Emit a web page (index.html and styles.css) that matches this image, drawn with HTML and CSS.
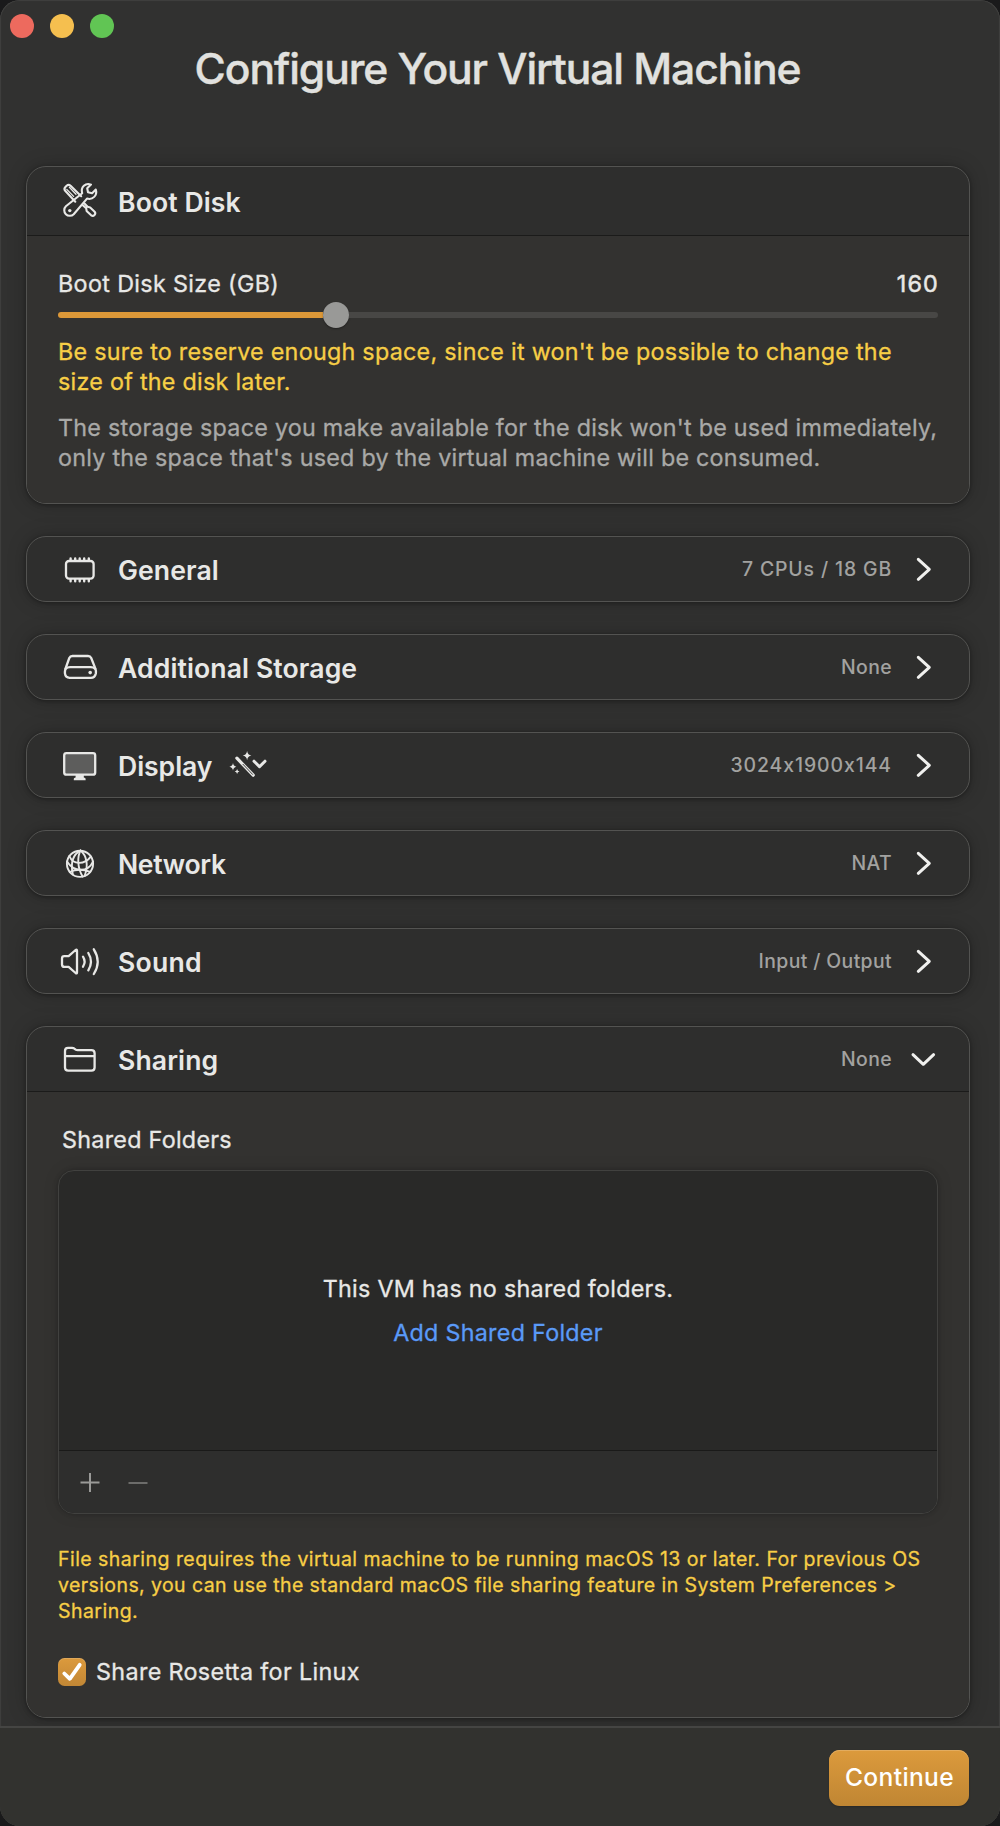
FILE: index.html
```
<!DOCTYPE html>
<html lang="en">
<head>
<meta charset="utf-8">
<title>Configure Your Virtual Machine</title>
<link rel="stylesheet" href="styles.css">
</head>
<body>
<div class="window">
  <header class="titlebar">
    <div class="lights">
      <span class="light light-close"></span>
      <span class="light light-minimize"></span>
      <span class="light light-zoom"></span>
    </div>
    <h1 class="title">Configure Your Virtual Machine</h1>
  </header>

  <main class="content">
    <section class="card">
      <div class="card-header card-header-tall card-header-open">
        <svg class="icon icon-tools" width="40" height="40" viewBox="0 0 40 40">
          <path d="M15.3 20.7 L5.2 9.8 Q3.6 7.7 5.4 5.9 L6.6 4.7 Q8.6 3 10.6 4.7 L21.2 15.2"/>
          <path d="M6.8 8.4 L13.6 15.4 M9.4 6.2 L16 13.2" class="thin"/>
          <path d="M22.5 24 L26.2 27.2 L26.6 29.9 L31.2 34.3 Q33 35.5 34.5 34 Q36 32.2 34.6 30.7 L30.2 26.4 L27.6 25.8 L24.5 22.6"/>
          <path d="M31 3.6 C25.5 1.3 20.4 6.4 22.2 12.2 L5.9 25.3 A5.3 5.3 0 1 0 13.7 33.2 L27 17.6 C32.7 19.2 37.6 14.4 35.8 8.6 L32.1 12.2 L28 11.2 L27.2 7.3 Z"/>
          <circle cx="9.8" cy="29.6" r="1.7" class="solid"/>
        </svg>
        <h2 class="card-title">Boot Disk</h2>
      </div>
      <div class="card-body boot-body">
        <div class="field-row">
          <span>Boot Disk Size (GB)</span>
          <span class="field-value">160</span>
        </div>
        <div class="slider">
          <div class="slider-fill"></div>
          <div class="slider-knob"></div>
          <div class="slider-rest"></div>
        </div>
        <p class="text text-warning">Be sure to reserve enough space, since it won't be possible to change the<br>size of the disk later.</p>
        <p class="text text-muted">The storage space you make available for the disk won't be used immediately,<br>only the space that's used by the virtual machine will be consumed.</p>
      </div>
    </section>

    <section class="card">
      <div class="card-header">
        <svg class="icon" width="40" height="40" viewBox="0 0 40 40">
          <rect x="6" y="12" width="27.6" height="17.6" rx="3"/>
          <path d="M10.6 11V9.4M15.2 11V9.4M19.7 11V9.4M24.2 11V9.4M28.8 11V9.4M10.6 30.5v1.7M15.2 30.5v1.7M19.7 30.5v1.7M24.2 30.5v1.7M28.8 30.5v1.7" class="pins"/>
        </svg>
        <h2 class="card-title">General</h2>
        <span class="summary summary-wide">7 CPUs / 18 GB</span>
        <svg class="chevron" width="28" height="28" viewBox="0 0 28 28"><path d="M9.3 4.3 L20.3 14.3 L9.3 24.3"/></svg>
      </div>
    </section>

    <section class="card">
      <div class="card-header">
        <svg class="icon" width="40" height="40" viewBox="0 0 40 40">
          <path d="M12.4 9 H28 Q30.3 9 31.2 11 L35.4 21.6 Q36.2 24 35.9 26.2 Q35 30.8 30.8 30.8 H9.6 Q5.4 30.8 4.9 26.2 Q4.8 24 5.5 21.6 L9.3 11 Q10.2 9 12.4 9 Z"/>
          <path d="M5.6 21.8 Q7.4 20.2 10 20.2 H30.6 Q33.4 20.2 35.2 21.8"/>
          <circle cx="30.2" cy="25.6" r="1.8" class="solid"/>
        </svg>
        <h2 class="card-title">Additional Storage</h2>
        <span class="summary">None</span>
        <svg class="chevron" width="28" height="28" viewBox="0 0 28 28"><path d="M9.3 4.3 L20.3 14.3 L9.3 24.3"/></svg>
      </div>
    </section>

    <section class="card">
      <div class="card-header">
        <svg class="icon" width="40" height="40" viewBox="0 0 40 40">
          <rect x="4.2" y="8.2" width="31" height="21.4" rx="2.2" class="screen"/>
          <path d="M15.6 30 h8.2 v2.4 q1.8 .3 1.8 1.4 v1.5 h-11.8 v-1.5 q0 -1.1 1.8 -1.4z" class="solid"/>
        </svg>
        <h2 class="card-title title-display">Display</h2>
        <svg class="wand" width="40" height="32" viewBox="0 0 40 32">
          <path d="M7.9 8.2 L24.2 25.2" class="wand-edge"/>
          <path d="M9 9.5 L12.3 12.8" class="wand-tip"/>
          <path d="M14 14.3 L23.6 24.4" class="wand-core"/>
          <path d="M18.1 1 Q18.7 5 22.4 5.6 Q18.7 6.2 18.1 10.2 Q17.5 6.2 13.7 5.6 Q17.5 5 18.1 1Z" class="solid"/>
          <path d="M4 13 Q4.5 16.2 7.4 16.7 Q4.5 17.2 4 20.4 Q3.5 17.2 .4 16.7 Q3.5 16.2 4 13Z" class="solid"/>
          <path d="M8.1 19 Q8.4 21.2 10.5 21.5 Q8.4 21.8 8.1 24 Q7.8 21.8 5.7 21.5 Q7.8 21.2 8.1 19Z" class="solid"/>
          <path d="M25 11.2 L30.5 16.7 L36 11.2" class="wand-chevron"/>
        </svg>
        <span class="summary summary-digits">3024x1900x144</span>
        <svg class="chevron" width="28" height="28" viewBox="0 0 28 28"><path d="M9.3 4.3 L20.3 14.3 L9.3 24.3"/></svg>
      </div>
    </section>

    <section class="card">
      <div class="card-header">
        <svg class="icon" width="40" height="40" viewBox="0 0 40 40">
          <g class="globe">
            <circle cx="20" cy="20.8" r="13.1"/>
            <path d="M20.5 7.6 C13 11.5 10.2 19 12.8 31.2"/>
            <path d="M20.5 7.6 C17 14 17.5 25 22.6 33.4"/>
            <path d="M20.5 7.6 C26.5 12.5 28.8 22 24.6 33"/>
            <path d="M9.4 13 C13 22.5 25 21.5 30.8 13.6"/>
            <path d="M7 18.5 C14 29.5 28 29.5 33 18.6"/>
            <path d="M9.8 29 C17 25.6 26 27.3 30.2 28.8"/>
          </g>
        </svg>
        <h2 class="card-title title-network">Network</h2>
        <span class="summary">NAT</span>
        <svg class="chevron" width="28" height="28" viewBox="0 0 28 28"><path d="M9.3 4.3 L20.3 14.3 L9.3 24.3"/></svg>
      </div>
    </section>

    <section class="card">
      <div class="card-header">
        <svg class="icon icon-sound" width="40" height="40" viewBox="0 0 40 40">
          <path d="M4.3 15.2 H8.6 L15.6 9 Q17 8.2 17 9.8 V31.4 Q17 33 15.6 32 L8.6 25.9 H4.3 Q2 25.9 2 23.6 V17.5 Q2 15.2 4.3 15.2 Z"/>
          <path d="M23 15.6 Q26.2 20.6 23 25.7 M28.3 12 Q33.6 20.6 28.3 29.3 M33.8 8.3 Q41.6 20.6 33.8 33"/>
        </svg>
        <h2 class="card-title title-wide">Sound</h2>
        <span class="summary">Input / Output</span>
        <svg class="chevron" width="28" height="28" viewBox="0 0 28 28"><path d="M9.3 4.3 L20.3 14.3 L9.3 24.3"/></svg>
      </div>
    </section>

    <section class="card card-sharing">
      <div class="card-header card-header-open">
        <svg class="icon" width="40" height="40" viewBox="0 0 40 40">
          <path d="M5 12 Q5 8.9 8 8.9 H12 Q13.4 8.9 14.4 9.7 L15.6 10.6 Q16.4 11.2 17.8 11.2 H31.4 Q34.6 11.2 34.6 14.3 V28.6 Q34.6 31.7 31.4 31.7 H8.2 Q5 31.7 5 28.6 Z M5 17.2 H34.6"/>
        </svg>
        <h2 class="card-title">Sharing</h2>
        <span class="summary">None</span>
        <svg class="chevron" width="28" height="28" viewBox="0 0 28 28"><path d="M4 9.7 L14.3 19.3 L24.6 9.7"/></svg>
      </div>
      <div class="card-body sharing-body">
        <div class="list-label">Shared Folders</div>
        <div class="list">
          <div class="list-empty">
            <span class="empty-text">This VM has no shared folders.</span>
            <a class="empty-link">Add Shared Folder</a>
          </div>
          <div class="list-toolbar">
            <svg width="20" height="20" viewBox="0 0 20 20"><path d="M.5 10.5 H19.5 M10 1 V20" class="plus"/></svg>
            <svg width="20" height="20" viewBox="0 0 20 20"><path d="M.5 11 H19.5" class="minus"/></svg>
          </div>
        </div>
        <p class="note">File sharing requires the virtual machine to be running macOS 13 or later. For previous OS<br><span class="note-line">versions, you can use the standard macOS file sharing feature in System Preferences &gt;</span><br>Sharing.</p>
        <label class="check-row">
          <span class="checkbox"><svg width="28" height="28" viewBox="0 0 28 28"><path d="M6.3 15.5 L11.8 20.8 L21.7 6.8"/></svg></span>
          <span class="check-label">Share Rosetta for Linux</span>
        </label>
      </div>
    </section>
  </main>

  <footer class="footer">
    <button class="continue" type="button">Continue</button>
  </footer>
</div>
</body>
</html>
```
FILE: styles.css
```
* { box-sizing: border-box; }

body {
  margin: 0;
  background: #1a1a1b;
  font-family: Inter, "Liberation Sans", sans-serif;
  font-size: 23.3px;
  letter-spacing: 0.28px;
  color: #e8e8e6;
}

h1, h2, p { margin: 0; }

svg { display: block; flex: none; }

.window {
  display: flex;
  flex-direction: column;
  width: 1000px;
  height: 1826px;
  border-radius: 20px;
  background: #313130;
  box-shadow: inset 0 0 1px 0.5px #4c4c4a;
  overflow: hidden;
}

/* Title bar */
.titlebar {
  height: 166px;
  padding-top: 14px;
  flex: none;
}

.lights {
  display: flex;
  gap: 16px;
  padding-left: 10px;
}

.light {
  width: 24px;
  height: 24px;
  border-radius: 50%;
}

.light-close { background: #ed6a5e; }
.light-minimize { background: #f5bf4f; }
.light-zoom { background: #61c554; }

.title {
  margin-top: 5px;
  text-align: center;
  font-size: 42.6px;
  font-weight: 500;
  line-height: 52px;
  letter-spacing: -1.07px;
  text-indent: -5px;
  color: #e1e1df;
  -webkit-text-stroke: 0.4px currentColor;
}

/* Cards */
.content {
  display: flex;
  flex-direction: column;
  gap: 32px;
  flex: 1;
  min-height: 0;
  padding: 0 30px 0 26px;
}

.card {
  flex: none;
  border: 1px solid #535351;
  border-radius: 20px;
  background: #2e2e2d;
  box-shadow: 0 0 20px rgba(0, 0, 0, 0.2), 0 1px 4px rgba(0, 0, 0, 0.35);
}

.card-header {
  display: flex;
  align-items: center;
  height: 64px;
  padding: 0 32px 0 33px;
}

.card-header-open {
  height: 65px;
  border-bottom: 1px solid #1b1b1a;
}

.card-header-tall { height: 69px; }

.card-body {
  padding: 0 31px;
  background: #333230;
  border-radius: 0 0 19px 19px;
  -webkit-text-stroke: 0.3px currentColor;
}

.card-title {
  margin-left: 18px;
  padding-top: 2px;
  font-size: 26.6px;
  font-weight: 600;
  line-height: 32px;
  letter-spacing: 0.1px;
}

.card-header-tall .card-title { padding-top: 1px; }
.title-display { letter-spacing: -0.05px; }
.title-network { letter-spacing: -0.32px; }
.title-wide { letter-spacing: 0.25px; }

.icon {
  fill: none;
  stroke: #e8e8e6;
  stroke-width: 2.3;
  stroke-linecap: round;
  stroke-linejoin: round;
}

.icon-tools { stroke-width: 2.1; }
.icon .thin { stroke-width: 1.3; }
.icon .pins { stroke-width: 2.4; }
.icon .globe { stroke-width: 1.9; }
.icon .screen { fill: #5d5d5c; }
.icon .solid, .wand .solid { fill: #e8e8e6; stroke: none; }
.icon-sound { overflow: visible; }

.wand {
  margin-left: 17px;
  margin-top: 2px;
  fill: none;
  stroke: #e8e8e6;
  stroke-linecap: round;
  stroke-linejoin: round;
}

.wand-edge { stroke-width: 3.2; }
.wand-tip { stroke-width: 1.5; }
.wand-core { stroke: #2e2e2d; stroke-width: 0.9; }
.wand-chevron { stroke-width: 3; }

.summary {
  margin-left: auto;
  font-size: 19.4px;
  font-weight: 500;
  line-height: 24px;
  letter-spacing: 0.38px;
  color: #a2a2a0;
}

.summary-wide { letter-spacing: 0.87px; }
.summary-digits { letter-spacing: 0.93px; }

.chevron {
  margin-left: 17px;
  fill: none;
  stroke: #f0f0ee;
  stroke-width: 3;
  stroke-linecap: round;
  stroke-linejoin: round;
}

/* Boot disk */
.boot-body {
  height: 267px;
  padding-top: 32px;
}

.field-row {
  display: flex;
  justify-content: space-between;
  line-height: 32px;
  letter-spacing: 0.36px;
}

.field-value {
  margin-right: -1px;
  letter-spacing: 1.2px;
  -webkit-text-stroke-width: 0.5px;
}

.slider {
  display: flex;
  align-items: center;
  height: 26px;
  margin-top: 2px;
}

.slider-fill {
  width: 265px;
  height: 6px;
  border-radius: 3px 0 0 3px;
  background: #dc9838;
}

.slider-knob {
  width: 26px;
  height: 26px;
  border-radius: 50%;
  background: #999997;
  box-shadow: 0 1px 2px rgba(0, 0, 0, 0.35);
}

.slider-rest {
  flex: 1;
  height: 6px;
  border-radius: 0 3px 3px 0;
  background: #484745;
}

.text {
  line-height: 30px;
  white-space: nowrap;
}

.text-warning {
  margin-top: 9px;
  letter-spacing: 0.27px;
  color: #f7ce46;
}

.text-muted {
  margin-top: 16px;
  letter-spacing: 0.26px;
  color: #a9a9a7;
}

/* Sharing */
.sharing-body {
  height: 625px;
  padding-top: 32px;
}

.list-label {
  padding-left: 4px;
  line-height: 32px;
}

.list {
  display: flex;
  flex-direction: column;
  height: 344px;
  margin-top: 14px;
  border: 1px solid #41413f;
  border-radius: 16px;
  background: #292928;
  box-shadow: 0 0 16px rgba(0, 0, 0, 0.12), 0 0 4px rgba(0, 0, 0, 0.2);
  overflow: hidden;
}

.list-empty {
  display: flex;
  flex-direction: column;
  align-items: center;
  justify-content: center;
  gap: 12px;
  flex: 1;
  line-height: 32px;
}

.empty-link { color: #5a9af8; }

.list-toolbar {
  display: flex;
  align-items: center;
  gap: 28px;
  height: 63px;
  padding: 0 20px 0 21px;
  border-top: 1px solid #1a1a19;
  background: #2e2e2d;
}

.plus, .minus { fill: none; stroke-width: 2; }
.plus { stroke: #9a9a98; }
.minus { stroke: #6c6c6a; }

.note {
  margin-top: 32px;
  font-size: 19.5px;
  line-height: 26px;
  letter-spacing: 0.46px;
  white-space: nowrap;
  color: #f7ce46;
}

.note-line { letter-spacing: 0.41px; }

.check-row {
  display: flex;
  align-items: center;
  gap: 10px;
  height: 32px;
  margin-top: 32px;
  line-height: 32px;
}

.check-label { letter-spacing: 0.36px; }

.checkbox {
  width: 28px;
  height: 28px;
  border-radius: 6.5px;
  background: linear-gradient(#dc9a3c, #c28735);
  box-shadow: inset 0 1px 0 rgba(255, 255, 255, 0.15);
}

.checkbox path {
  fill: none;
  stroke: #fff;
  stroke-width: 3.8;
  stroke-linecap: round;
  stroke-linejoin: round;
}

/* Footer */
.footer {
  display: flex;
  justify-content: flex-end;
  align-items: flex-start;
  height: 100px;
  flex: none;
  padding: 22px 31px 0;
  border-top: 2px solid #454543;
  background: #32322f;
}

.continue {
  width: 140px;
  height: 56px;
  padding: 0 0 2px 1px;
  border: 0;
  border-radius: 11px;
  background: linear-gradient(#dc9a3c, #c08633);
  box-shadow: inset 0 1px 0 #e2ac5f, 0 1px 2px rgba(0, 0, 0, 0.2);
  font: 500 24.6px Inter, "Liberation Sans", sans-serif;
  letter-spacing: 0.35px;
  color: #fff;
}
```
